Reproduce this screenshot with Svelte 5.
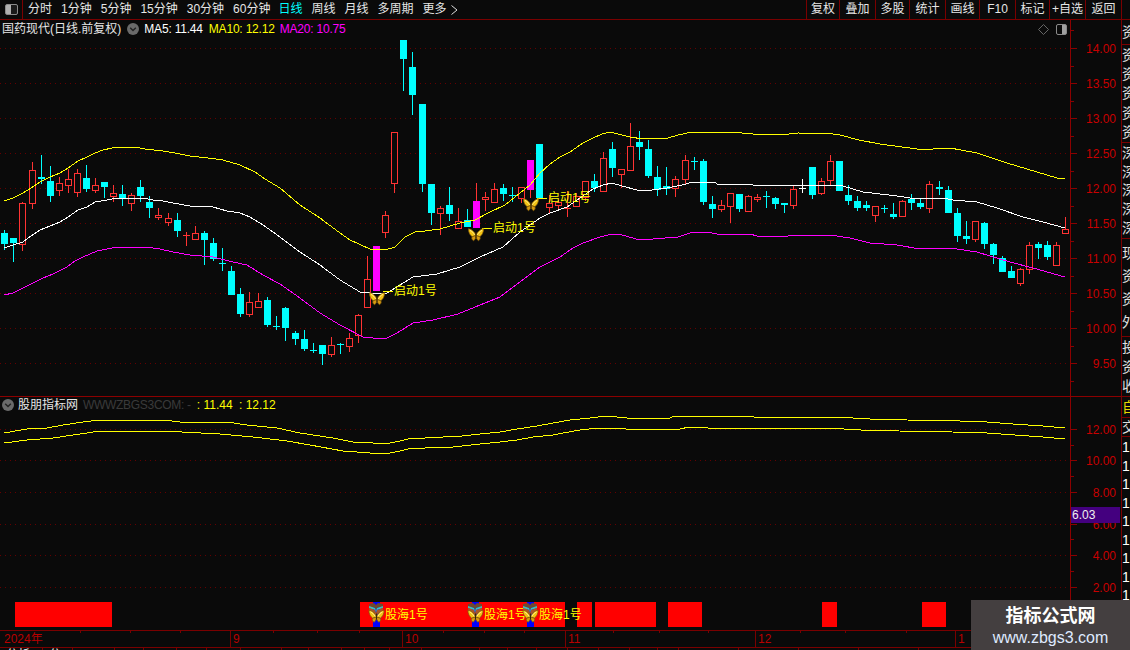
<script>
  const menu = ['分时','1分钟','5分钟','15分钟','30分钟','60分钟','日线','周线','月线','多周期'];
  const tools = [['复权',33],['叠加',36],['多股',34],['统计',36],['画线',34],['F10',36],['标记',34],['+自选',36],['返回',37]];
  // type, high, top, bottom, low (screen pixels)
  const raw = [
    ['c',230,233,244,249],['c',238,238,243,261],['r',202,203,244,250],['r',162,170,203,208],['c',155,177,179,183],
    ['c',166,181,196,201],['r',177,183,190,195],['r',169,179,185,192],['r',169,173,192,196],['c',165,178,189,191],
    ['r',178,185,190,192],['c',182,182,187,197],['r',185,193,196,201],['c',185,194,199,205],['r',193,195,203,210],
    ['c',180,187,196,201],['c',196,202,208,217],['r',208,215,217,219],['r',213,218,222,225],['c',213,220,231,236],
    ['r',232,235,236,245],['r',226,233,239,239],['c',231,233,240,264],['c',238,243,259,260],['c',248,263,263,270],
    ['c',266,271,295,295],['c',288,294,314,316],['r',292,302,314,316],['r',293,301,307,307],['c',297,300,325,326],
    ['c',316,326,326,329],['c',307,308,328,340],['c',331,333,339,344],['c',330,339,349,350],['c',343,350,350,352],
    ['c',345,345,354,364],['r',337,345,354,356],['c',343,344,344,353],['r',333,338,346,351],['r',314,315,335,342],
    ['r',256,279,307,307],['m',246,246,291,291],['r',211,215,232,237],['r',132,132,183,192],['c',40,40,59,90],
    ['c',52,67,95,114],['c',104,104,184,191],['c',184,184,213,224],['r',206,208,213,234],['c',187,205,214,220],
    ['r',208,221,228,228],['c',209,220,227,227],['m',183,201,228,228],['r',192,197,199,210],['r',183,189,202,202],
    ['c',184,188,194,200],['c',187,195,195,201],['r',187,187,198,202],['m',160,160,190,197],['c',144,144,198,198],
    ['r',195,203,207,212],['r',200,202,205,208],['r',191,208,209,216],['r',193,196,206,206],['r',181,181,197,200],
    ['c',174,181,188,191],['r',152,158,191,191],['c',142,149,168,176],['r',169,169,174,187],['r',123,146,170,170],
    ['c',131,142,147,159],['c',140,149,176,177],['c',166,177,190,195],['c',167,186,189,194],['r',176,179,188,196],
    ['r',155,160,179,184],['c',157,161,161,169],['c',159,161,202,204],['c',196,204,209,217],['r',200,205,209,211],
    ['r',193,193,206,222],['c',194,194,209,211],['r',195,196,211,211],['r',194,197,199,201],['c',191,196,196,207],
    ['c',197,198,204,208],['c',203,203,205,212],['r',186,189,205,208],['w',179,188,188,192],['c',167,167,195,198],
    ['r',178,181,193,194],['r',155,161,180,185],['c',161,161,191,191],['c',185,195,201,204],['c',196,201,208,210],
    ['c',201,205,208,210],['r',206,206,215,221],['c',205,208,208,212],['c',203,214,217,218],['r',200,201,216,216],
    ['c',194,199,203,209],['c',198,203,207,208],['r',181,184,208,212],['c',181,187,189,194],['c',186,190,213,213],
    ['c',208,213,236,241],['c',221,236,239,243],['r',221,221,239,241],['c',222,223,244,248],['c',243,244,255,263],
    ['c',256,258,272,272],['c',266,271,278,278],['r',268,269,283,285],['r',242,245,269,273],['c',242,244,248,258],
    ['c',241,245,257,259],['r',242,245,265,265],['r',217,229,233,233]
  ];
  const colors = { c:'#00ffff', r:'#ff3333', m:'#ff00ff', w:'#ffffff' };
  const candles = raw.map((d, i) => {
    const [t, high, top, bot, low] = d;
    return { x: Math.round(4.3 + 9.07 * i), t, high, top, bot, low, color: colors[t], wick: t === 'm' ? colors.r : colors[t], solid: t !== 'r' || bot - top <= 1 };
  });

  const yellow = '4,201 13,198 23,193 31,188 40,182 50,177 60,173 68,168 78,161 87,157 95,153 103,150 112,148 122,147 135,147 145,149 163,151 175,153 190,156 208,158 223,160 240,165 255,172 265,179 280,188 300,205 320,218 340,233 350,240 370,249 385,250 395,247 405,237 415,232 425,231 440,229 460,223 475,220 490,212 505,205 520,193 530,185 540,173 550,164 560,157 570,152 583,143 593,138 602,134 610,132 618,134 630,137 643,139 657,138 668,138 678,135 692,132 715,132 742,133 753,134 780,135 798,133 833,134 840,135 859,140 880,144 917,149 933,149 950,148 977,153 1007,163 1037,172 1057,178 1065,179';
  const white = '4,248 13,245 23,242 31,236 40,230 50,226 60,222 68,217 78,210 87,207 95,202 107,200 117,198 143,198 153,200 163,201 173,203 190,206 213,207 227,211 240,213 250,217 263,225 273,232 280,237 300,252 320,265 340,280 360,292 370,293 387,293 400,285 413,277 437,274 460,267 480,257 503,247 520,232 540,218 550,213 567,207 580,198 593,189 603,185 612,183 622,186 637,190 652,190 667,188 682,185 693,182 715,182 717,184 742,184 753,185 800,185 830,185 843,186 863,192 897,196 917,199 943,198 953,200 977,202 997,208 1023,217 1043,222 1065,228';
  const magenta = '4,295 13,293 23,288 33,283 43,278 53,274 67,267 75,261 83,257 97,251 107,249 118,247 145,247 160,249 173,252 190,255 213,257 233,262 247,265 263,275 280,284 300,298 320,313 340,325 363,337 373,338 387,338 397,333 413,323 433,320 458,314 480,305 500,297 520,282 540,267 560,257 573,248 583,243 600,237 612,234 622,235 640,240 653,239 678,237 693,232 707,232 717,234 750,234 757,236 788,236 790,235 830,235 850,238 870,243 897,245 920,249 927,248 950,248 977,252 990,256 1010,262 1033,268 1065,277';
  const subA = '4,433 27,429 47,428 63,425 83,422 100,420 163,420 180,422 227,422 247,425 277,428 300,433 333,438 353,442 373,443 390,443 400,441 408,439 425,438 443,437 462,436 480,434 500,432 517,429 537,426 553,423 570,420 590,418 607,416 617,417 627,418 670,418 672,417 688,416 753,416 754,417 852,417 853,418 870,419 906,419 907,420 960,421 987,422 1013,424 1043,426 1065,428';
  const subB = '4,443 27,440 53,438 100,431 163,431 220,434 253,437 287,441 310,445 343,451 370,453 390,453 400,451 408,449 425,448 453,447 480,444 500,442 517,440 533,437 553,435 563,433 580,430 598,428 626,429 680,429 689,427 707,427 708,428 843,428 844,429 861,430 898,430 899,431 952,432 987,433 1015,435 1043,437 1065,439';

  const mainGrid = [48,83,118,153,188,223,258,293,328,363];
  const mainLabels = ['14.00','13.50','13.00','12.50','12.00','11.50','11.00','10.50','10.00','9.50'];
  const subGrid = [429,460,492,524,555,587];
  const subLabels = ['12.00','10.00','8.00','6.00','4.00','2.00'];
  const subMinor = [445,476,508,539,571];

  const bars = [[15,97],[360,205],[577,15],[595,61],[668,34],[822,15],[922,24]];
  const blues = [373,472,527];
  const notes = [[383,291,369,292],[482,228,468,228],[537,198,523,198]];
  const stamps = [[368,385],[467,484],[522,539]];
  const monthLines = [[230,'9'],[402,'10'],[565,'11'],[755,'12'],[955,'1']];
  const xTicks = [80,130,180,273,317,359,443,484,524,613,659,708,800,845,906];
  const tabs = [
    [43,'分析'],[30,'分析'],[42,''],[29,''],[33,''],[30,''],[34,''],[41,''],[27,''],[33,''],[23,''],[25,''],
    [32,''],[58,''],[28,''],[29,''],[31,''],[31,''],[31,''],[28,''],[21,''],[60,''],[60,''],[60,''],[60,'']
  ];

  const sideTop = [
    { h: 25, c: ['资'] },
    { h: 98, c: ['资','资','资','资','资'] },
    { h: 96, c: ['深','深','深','深','深'] },
    { h: 98, c: ['现','资','资','外'] },
    { h: 60, c: ['投','资','收'] }
  ];
  const sideNums = ['1','1','1','1','1','1','1','1','1','1','1','1'];
</script>

<div class="page">
  <header class="topbar">
    <div class="corner"><span class="split-icon"></span></div>
    <nav class="menu">
      {#each menu as m}<span class:on={m === '日线'}>{m}</span>{/each}
      <span class="more">更多<svg width="9" height="12" viewBox="0 0 9 12"><path d="M1.5 1.5 7 6 1.5 10.5" fill="none" stroke="#ddd"/></svg></span>
    </nav>
    <div class="tools">
      {#each tools as [name, w]}<span style="width:{w}px">{name}</span>{/each}
    </div>
  </header>

  <div class="body">
    <div class="charts">
      <section class="panel main-panel">
        <div class="plot">
          <svg class="chart" viewBox="0 20 1071 376" width="1071" height="376">
            <defs>
              <g id="wing">
                <path d="M8 7.5C6.5 3.5 3.5 1 .4 .8.3 4 2 7.5 4.2 8.7Z" fill="#f4c414" stroke="#7a5508" stroke-width=".7"/>
                <path d="M8 7.5 4.2 8.7C3.2 10.2 4 12 5.6 12.7 7.2 11.6 8 9.4 8 7.5Z" fill="#d79c10" stroke="#7a5508" stroke-width=".7"/>
                <path d="M2 2.4C4 3.4 5.6 5 6.6 6.8" fill="none" stroke="#fff09a" stroke-width=".9"/>
              </g>
              <g id="fly">
                <use href="#wing"/>
                <use href="#wing" transform="matrix(-1 0 0 1 16 0)"/>
                <rect x="7.5" y="4" width="1" height="6" fill="#3a2604"/>
              </g>
            </defs>
            {#each mainGrid as y}<line class="dots" x1="0" x2="1070" y1={y + .5} y2={y + .5}/>{/each}
            {#each candles as k}
              {#if k.high < k.top}<rect class="px" x={k.x} y={k.high} width="1" height={k.top - k.high} fill={k.wick}/>{/if}
              {#if k.low > k.bot}<rect class="px" x={k.x} y={k.bot} width="1" height={k.low - k.bot + 1} fill={k.wick}/>{/if}
              {#if k.solid}
                <rect class="px" x={k.x - 3} y={k.top} width="7" height={Math.max(k.bot - k.top, 1)} fill={k.color}/>
              {:else}
                <rect class="px" x={k.x - 2.5} y={k.top + .5} width="6" height={k.bot - k.top} fill="#0a0a0a" stroke={k.color}/>
              {/if}
            {/each}
            <polyline class="ln" points={yellow} stroke="#ffff00"/>
            <polyline class="ln" points={white} stroke="#ffffff"/>
            <polyline class="ln" points={magenta} stroke="#ff00ff"/>
            {#each notes as [x, y, fx, fy]}
              <line class="ln" x1={x} x2={x + 10} y1={y + .5} y2={y + .5} stroke="#ffff00"/>
              <text class="note" x={x + 11} y={y + 4}>启动1号</text>
              <use href="#fly" x={fx} y={fy}/>
            {/each}
          </svg>
          <div class="legend">
            <span class="code">国药现代(日线.前复权)</span>
            <svg class="round" width="12" height="12" viewBox="0 0 12 12"><circle cx="6" cy="6" r="6" fill="#6a6a6a"/><path d="M3.2 4.8 6 7.6 8.8 4.8" fill="none" stroke="#222" stroke-width="1.4"/></svg>
            <span class="w">MA5: 11.44</span>
            <span class="y">MA10: 12.12</span>
            <span class="p">MA20: 10.75</span>
          </div>
          <div class="corner-icons">
            <svg width="11" height="11" viewBox="0 0 11 11"><path d="M5.5.5 10.5 5.5 5.5 10.5.5 5.5Z" fill="none" stroke="#666"/></svg>
            <span class="split-icon small"></span>
          </div>
        </div>
        <svg class="axis" viewBox="1071 20 50 376" width="50" height="376">
          {#each mainGrid as y, i}
            <rect class="tick" x="1071" y={y} width="6" height="1"/>
            <text class="lab" x="1116" y={y + 4.5}>{mainLabels[i]}</text>
            {#if i < 9}<rect class="tick" x="1071" y={y + 18} width="3" height="1"/>{/if}
          {/each}
          <rect class="tick" x="1071" y="30" width="3" height="1"/>
          <rect class="tick" x="1071" y="381" width="3" height="1"/>
        </svg>
      </section>

      <section class="panel sub-panel">
        <div class="plot">
          <svg class="chart" viewBox="0 397 1071 233" width="1071" height="233">
            {#each subGrid as y}<line class="dots" x1="0" x2="1070" y1={y + .5} y2={y + .5}/>{/each}
            <polyline class="ln" points={subA} stroke="#ffff00"/>
            <polyline class="ln" points={subB} stroke="#ffff00"/>
            {#each bars as [x, w]}<rect class="px" x={x} y="602" width={w} height="25" fill="#ff0000"/>{/each}
            {#each blues as x}<rect class="px" x={x} y="602" width="7" height="25" fill="#0000ff"/>{/each}
            {#each stamps as [x, t]}
              <g transform="translate({x} 603)">
                <path d="M1 1 6 0 8 2 10 0 15 1 15 3 9 5 8 8 7 5 1 3Z" fill="#6e4a30"/>
                <path d="M1 3 7 5 8 8 9 5 15 3 15 5 9 7 8 10 7 7 1 5Z" fill="#35c4c0"/>
                <path d="M1 5 7 7 8 10 9 7 15 5 15 7 8 12 1 7Z" fill="#a8552a"/>
                <use href="#fly" x="0.5" y="6.5"/>
              </g>
              <text class="note" x={t} y="619">股海1号</text>
            {/each}
          </svg>
          <div class="legend sub-legend">
            <svg class="round" width="12" height="12" viewBox="0 0 12 12"><circle cx="6" cy="6" r="6" fill="#6a6a6a"/><path d="M3.2 4.8 6 7.6 8.8 4.8" fill="none" stroke="#222" stroke-width="1.4"/></svg>
            <span class="name">股朋指标网</span>
            <span class="dim">WWWZBGS3COM: -</span>
            <span class="vals"><i>:</i> 11.44 <i class="second">:</i> 12.12</span>
          </div>
        </div>
        <svg class="axis" viewBox="1071 397 50 233" width="50" height="233">
          {#each subGrid as y, i}
            <rect class="tick" x="1071" y={y} width="6" height="1"/>
            <text class="lab" x="1116" y={y + 4.5}>{subLabels[i]}</text>
          {/each}
          {#each subMinor as y}<rect class="tick" x="1071" y={y} width="3" height="1"/>{/each}
        </svg>
        <div class="price">6.03</div>
      </section>

      <footer class="xaxis">
        <span class="year">2024年</span>
        {#each monthLines as [x, label]}
          <span class="month" style="left:{x}px">{label}</span>
        {/each}
        {#each xTicks as x}<i class="xt" style="left:{x}px"></i>{/each}
      </footer>
      <div class="tabs">
        {#each tabs as [w, label]}<span style="width:{w}px">{label}</span>{/each}
      </div>
    </div>

    <aside class="side">
      {#each sideTop as g}
        <div class="group" style="height:{g.h}px">
          {#each g.c as c}<span>{c}</span>{/each}
        </div>
      {/each}
      <div class="group self"><span>自</span></div>
      <div class="group ex"><span>交</span></div>
      <div class="nums">
        {#each sideNums as n}<span>{n}</span>{/each}
      </div>
    </aside>
  </div>

  <div class="stamp">
    <strong>指标公式网</strong>
    <span>www.zbgs3.com</span>
  </div>
</div>

<style>
  :global(body) { margin: 0; background: #0a0a0a; }
  .page {
    position: relative; width: 1130px; height: 650px; overflow: hidden;
    display: flex; flex-direction: column; background: #0a0a0a; color: #e6e6e6;
    font: 12px "Liberation Sans", "Noto Sans CJK SC", sans-serif;
  }
  .topbar {
    flex: none; height: 19px; display: flex; align-items: stretch;
    border-bottom: 1px solid #7a0000; line-height: 19px;
  }
  .corner { width: 23px; box-sizing: border-box; border-right: 1px solid #7a0000; display: flex; align-items: center; justify-content: center; }
  .split-icon {
    display: block; width: 11px; height: 9px; border: 1px solid #8a8a8a; border-radius: 2px;
    background: linear-gradient(90deg, #0a0a0a 50%, #a0a0a0 50%);
  }
  .corner .split-icon { background: linear-gradient(90deg, #b0b0b0 50%, #1a1a1a 50%); }
  .menu { display: flex; gap: 9px; padding-left: 5px; }
  .menu span:nth-child(n+7) { position: relative; left: -1px; }
  .menu .on { color: #00ffff; }
  .more { display: flex; align-items: center; gap: 3px; }
  .tools { margin-left: auto; margin-right: 8px; display: flex; }
  .tools span { box-sizing: border-box; text-align: center; border-left: 1px solid #7a0000; }
  .tools span:last-child { border-right: 1px solid #7a0000; }

  .body { flex: 1; display: flex; min-height: 0; }
  .charts { width: 1121px; flex: none; display: flex; flex-direction: column; }
  .side { flex: 1; border-left: 1px solid #7a0000; overflow: hidden; display: flex; flex-direction: column; }

  .panel { display: flex; position: relative; flex: none; }
  .main-panel { height: 377px; }
  .sub-panel { height: 233px; border-top: 1px solid #8c0000; margin-top: -1px; }
  .plot { width: 1071px; position: relative; flex: none; }
  .axis { display: block; flex: none; border-left: 1px solid #8c0000; margin-left: -1px; }
  .chart { display: block; }
  .px { shape-rendering: crispEdges; }
  .ln { fill: none; stroke-width: 1; shape-rendering: crispEdges; }
  .dots { stroke: #650000; stroke-width: 1; stroke-dasharray: 1 4; shape-rendering: crispEdges; }
  .note { fill: #ffff00; font-size: 12px; }
  .tick { fill: #8c0000; shape-rendering: crispEdges; }
  .lab { fill: #c80000; font-size: 12px; text-anchor: end; }

  .legend { position: absolute; left: 2px; top: 2px; height: 14px; line-height: 14px; display: flex; align-items: center; white-space: nowrap; }
  .legend .round { margin: 0 4px 0 6px; }
  .legend .w { color: #fff; letter-spacing: -.2px; margin-left: 1px; }
  .legend .y { color: #ffff00; letter-spacing: -.2px; margin-left: 6px; }
  .legend .p { color: #ff00ff; letter-spacing: -.2px; margin-left: 5px; }
  .corner-icons { position: absolute; right: 4px; top: 4px; display: flex; align-items: center; gap: 7px; }
  .small { width: 9px; height: 9px; }

  .sub-legend { top: 0; height: 15px; left: 2px; }
  .sub-legend .round { margin: 0 4px 0 0; }
  .sub-legend .name { color: #e6e6e6; }
  .sub-legend .dim { color: #3a3a3a; margin-left: 5px; letter-spacing: -.3px; }
  .sub-legend .vals { color: #ffff00; margin-left: 6px; }
  .sub-legend i { font-style: normal; }
  .sub-legend .second { margin-left: 3px; }

  .price {
    position: absolute; left: 1071px; top: 110px; width: 49px; height: 16px; line-height: 16px;
    background: #44007f; color: #f0f0f0; font-size: 12px; padding-left: 1px; box-sizing: border-box;
  }

  .xaxis { flex: none; height: 16px; border-top: 1px solid #7a0000; border-bottom: 1px solid #7a0000; position: relative; color: #b80000; line-height: 16px; }
  .year { position: absolute; left: 4px; }
  .month { position: absolute; top: 0; height: 16px; padding-left: 2px; border-left: 1px solid #7a0000; }
  .xt { position: absolute; top: 0; width: 1px; height: 2px; background: #7a0000; }

  .tabs { flex: 1; display: flex; overflow: hidden; }
  .tabs span { flex: none; box-sizing: border-box; border-right: 1px solid #7a0000; font-size: 12px; line-height: 15px; padding-left: 6px; color: #eee; }

  .group { flex: none; box-sizing: border-box; border-bottom: 1px solid #7a0000; display: flex; flex-direction: column; justify-content: space-evenly; overflow: hidden; }
  .group span { display: block; margin-left: 0; font-size: 14px; line-height: 18px; color: #e0e0e0; white-space: nowrap; width: 14px; }
  .self { height: 21px; }
  .self span { color: #e6d800; }
  .ex { height: 19px; }
  .nums { display: flex; flex-direction: column; padding-top: 1px; }
  .nums span { height: 18.5px; line-height: 18.5px; font-size: 14px; color: #fff; }

  .stamp {
    position: absolute; left: 971px; top: 600px; width: 159px; height: 50px; background: #443f40;
    display: flex; flex-direction: column; align-items: center; justify-content: center; color: #fff;
  }
  .stamp strong { font-size: 18px; line-height: 25px; font-weight: 700; }
  .stamp span { font-size: 16px; line-height: 18px; color: #dfeaff; }
</style>
